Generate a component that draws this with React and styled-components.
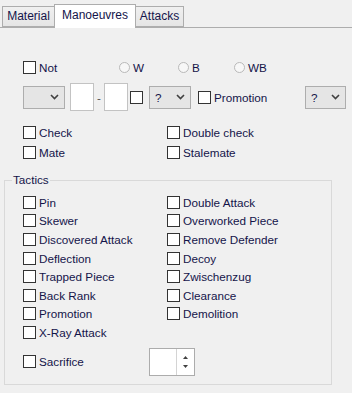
import React from "react";
import styled, { createGlobalStyle } from "styled-components";

const Global = createGlobalStyle`
  html, body { margin: 0; padding: 0; background: #f0f0f0; }
  body {
    font-family: "Liberation Sans", Arial, sans-serif;
    font-size: 11.7px;
    color: #14144a;
  }
  * { box-sizing: border-box; }
`;

const Window = styled.div`
  width: 352px;
  height: 393px;
  background: #f0f0f0;
  overflow: hidden;
`;

const TabBar = styled.div`
  display: flex;
  align-items: flex-end;
  height: 28px;
  padding-left: 2px;
  border-bottom: 1px solid #adadad;
`;

const Tab = styled.div`
  position: relative;
  display: flex;
  align-items: center;
  justify-content: center;
  font-size: 12px;
  width: ${(p) => p.$w}px;
  height: ${(p) => (p.$active ? 24 : 21)}px;
  margin-left: ${(p) => (p.$first ? 0 : -1)}px;
  margin-bottom: ${(p) => (p.$active ? -1 : 0)}px;
  padding-bottom: ${(p) => (p.$active ? 3 : 1)}px;
  border: 1px solid #adadad;
  border-bottom: ${(p) => (p.$active ? "none" : "1px solid #adadad")};
  background: ${(p) => (p.$active ? "#ffffff" : "linear-gradient(#f0f0f0, #e5e5e5)")};
  z-index: ${(p) => (p.$active ? 2 : 1)};
  color: #14144a;
`;

const Top = styled.div`
  padding: 29px 6px 0 23px;
  display: flex;
  flex-direction: column;
`;

const RadioRow = styled.div`
  display: grid;
  grid-template-columns: 96px 59px 56px auto;
  align-items: center;
  height: 20px;
`;

const ControlRow = styled.div`
  display: flex;
  align-items: center;
  height: 28px;
  margin-top: 6px;
`;

const PairGrid = styled.div`
  display: grid;
  grid-template-columns: ${(p) => p.$col}px auto;
  grid-auto-rows: ${(p) => p.$row}px;
  align-items: center;
  margin-top: ${(p) => p.$mt || 0}px;
`;

const Item = styled.label`
  display: flex;
  align-items: center;
  gap: 2px;
  white-space: nowrap;
  margin-left: ${(p) => p.$ml || 0}px;
  width: ${(p) => (p.$w ? `${p.$w}px` : "auto")};
`;

const Box = styled.span`
  display: inline-block;
  width: 13px;
  height: 13px;
  border: 1px solid #333333;
  background: #ffffff;
  flex-shrink: 0;
  margin-right: 1px;
`;

const RadioItem = styled.label`
  display: flex;
  align-items: center;
  gap: 3px;
`;

const Circle = styled.span`
  width: 11px;
  height: 11px;
  border-radius: 50%;
  border: 1px solid #b9b9b9;
  background: #f7f7f7;
`;

const Combo = styled.div`
  display: flex;
  align-items: center;
  justify-content: space-between;
  width: ${(p) => p.$w}px;
  height: 23px;
  padding: 0 5px 0 5px;
  border: 1px solid #adadad;
  background: #e5e5e5;
  margin-left: ${(p) => (p.$auto ? "auto" : `${p.$ml || 0}px`)};
  flex-shrink: 0;
`;

const Field = styled.div`
  width: 24px;
  height: 28px;
  background: #ffffff;
  border: 1px solid #c3c3c3;
  flex-shrink: 0;
  margin-left: ${(p) => p.$ml || 0}px;
`;

const Dash = styled.span`
  width: 10px;
  text-align: center;
  color: #555;
`;

const Group = styled.div`
  position: relative;
  margin: 18px 20px 0 4px;
  border: 1px solid #d9d9d9;
  padding: 12px 0 8px 18px;
`;

const Legend = styled.span`
  position: absolute;
  top: -8px;
  left: 7px;
  padding: 0 1px;
  background: #f0f0f0;
  line-height: 14px;
`;

const SacrificeRow = styled.div`
  display: flex;
  align-items: center;
  height: 28px;
  margin-top: 6px;
`;

const Spin = styled.div`
  display: flex;
  height: 28px;
  border: 1px solid #acacac;
  background: #ffffff;
`;

const SpinField = styled.div`
  width: 27px;
  border-right: 1px solid #d4d4d4;
`;

const SpinButtons = styled.div`
  width: 17px;
  display: flex;
  flex-direction: column;
  align-items: center;
  justify-content: center;
  gap: 6px;
`;

const Chevron = () => (
  <svg width="9" height="6" viewBox="0 0 9 6">
    <path d="M1 1 L4.5 4.5 L8 1" fill="none" stroke="#404040" strokeWidth="1.6" />
  </svg>
);

const Arrow = ({ up }) => (
  <svg width="5" height="3" viewBox="0 0 5 3">
    <path d={up ? "M0 3 L2.5 0 L5 3 Z" : "M0 0 L2.5 3 L5 0 Z"} fill="#404040" />
  </svg>
);

const CB = ({ children, ml, w }) => (
  <Item $ml={ml} $w={w}>
    <Box />
    {children}
  </Item>
);

const tactics = [
  ["Pin", "Double Attack"],
  ["Skewer", "Overworked Piece"],
  ["Discovered Attack", "Remove Defender"],
  ["Deflection", "Decoy"],
  ["Trapped Piece", "Zwischenzug"],
  ["Back Rank", "Clearance"],
  ["Promotion", "Demolition"],
  ["X-Ray Attack", null],
];

export default function App() {
  return (
    <Window>
      <Global />
      <TabBar>
        <Tab $w={53} $first>Material</Tab>
        <Tab $w={82} $active>Manoeuvres</Tab>
        <Tab $w={49}>Attacks</Tab>
      </TabBar>
      <Top>
        <RadioRow>
          <CB>Not</CB>
          <RadioItem><Circle />W</RadioItem>
          <RadioItem><Circle />B</RadioItem>
          <RadioItem><Circle />WB</RadioItem>
        </RadioRow>
        <ControlRow>
          <Combo $w={42}><span /><Chevron /></Combo>
          <Field $ml={5} />
          <Dash>-</Dash>
          <Field />
          <CB ml={2} />
          <Combo $w={42} $ml={5}><span>?</span><Chevron /></Combo>
          <CB ml={7}>Promotion</CB>
          <Combo $w={41} $auto><span>?</span><Chevron /></Combo>
        </ControlRow>
        <PairGrid $col={144} $row={20} $mt={11}>
          <CB>Check</CB>
          <CB>Double check</CB>
          <CB>Mate</CB>
          <CB>Stalemate</CB>
        </PairGrid>
      </Top>
      <Group>
        <Legend>Tactics</Legend>
        <PairGrid $col={144} $row={18.6}>
          {tactics.map(([a, b]) => (
            <React.Fragment key={a}>
              <CB>{a}</CB>
              {b ? <CB>{b}</CB> : <span />}
            </React.Fragment>
          ))}
        </PairGrid>
        <SacrificeRow>
          <CB w={126}>Sacrifice</CB>
          <Spin>
            <SpinField />
            <SpinButtons>
              <Arrow up />
              <Arrow />
            </SpinButtons>
          </Spin>
        </SacrificeRow>
      </Group>
    </Window>
  );
}
